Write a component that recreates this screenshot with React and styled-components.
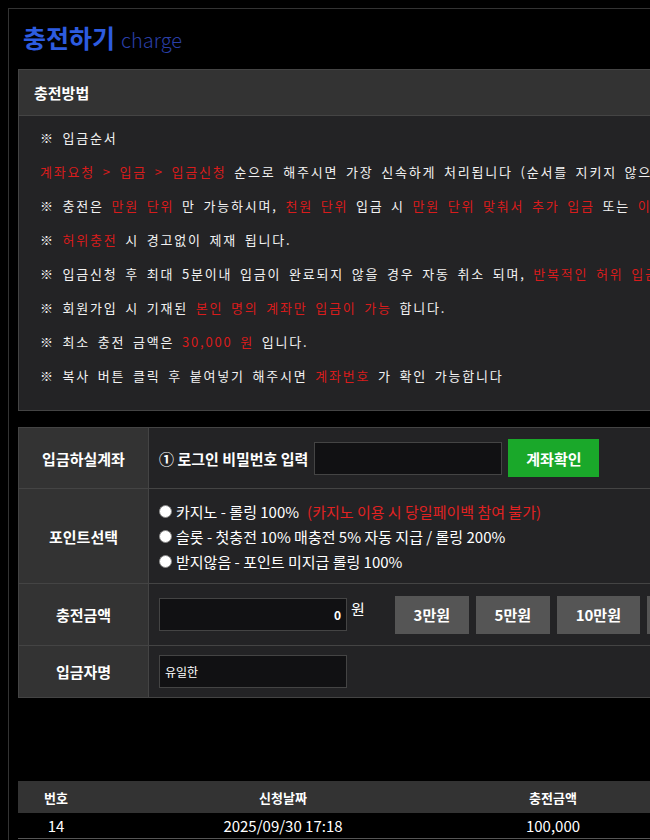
import styled, { createGlobalStyle } from "styled-components";

const GlobalStyle = createGlobalStyle`
  html { overflow: hidden; }
  body {
    margin: 8px;
    width: 1140px;
    background: #000;
    color: #fff;
    font-family: "Noto Sans CJK KR", "Noto Sans", sans-serif;
  }
`;

const Wrap = styled.div`
  width: 1100px;
  min-width: 1100px;
  border: 1px solid #333;
  padding: 7px 9px 40px;
`;

const Title = styled.h1`
  margin: 0 0 11px 5px;
  display: flex;
  align-items: baseline;
  gap: 6px;
  height: 42px;
  font-size: 25px;
  font-weight: 700;
  color: #2d5ce0;
  line-height: 42px;
  span {
    font-size: 20px;
    font-weight: 300;
    color: #2a3fa6;
  }
`;

const Panel = styled.div`
  border: 1px solid #444;
  background: #232325;
`;

const PanelHead = styled.div`
  height: 45px;
  display: flex;
  align-items: center;
  padding-left: 15px;
  background: #333;
  border-bottom: 1px solid #444;
  font-size: 15px;
  font-weight: 700;
`;

const PanelBody = styled.div`
  padding: 5px 21px 17px;
  font-size: 13px;
  letter-spacing: 1.8px;
  word-spacing: 3px;
  color: #f2f2f2;
  p {
    margin: 0;
    height: 34px;
    line-height: 34px;
    white-space: nowrap;
  }
  em {
    font-style: normal;
    color: #d81c1c;
  }
`;

const FormTable = styled.table`
  margin-top: 16px;
  width: 100%;
  border-collapse: collapse;
  font-size: 15px;
  td, th { border: 1px solid #444; }
`;

const Label = styled.th`
  width: 129px;
  background: #333;
  font-weight: 700;
  font-size: 15px;
  height: ${(p) => p.$h}px;
  padding: 0;
`;

const Cell = styled.td`
  background: #232325;
  padding: 0 10px;
  vertical-align: middle;
`;

const Inline = styled.div`
  display: flex;
  align-items: center;
  gap: ${(p) => p.$gap || 0}px;
`;

const Strong = styled.span`
  font-weight: 700;
`;

const Input = styled.div`
  box-sizing: border-box;
  width: ${(p) => p.$w || 188}px;
  height: 33px;
  background: #111113;
  border: 1px solid #444;
  display: flex;
  align-items: center;
  justify-content: ${(p) => (p.$right ? "flex-end" : "flex-start")};
  padding: 0 5px;
  font-size: 12px;
  font-weight: ${(p) => (p.$right ? 700 : 400)};
  flex-shrink: 0;
`;

const GreenButton = styled.button`
  width: 91px;
  height: 38px;
  border: none;
  background: #1aa82a;
  color: #fff;
  font-family: inherit;
  font-size: 15px;
  font-weight: 700;
`;

const AmountButton = styled.button`
  width: ${(p) => p.$w}px;
  height: 38px;
  border: none;
  background: #555;
  color: #fff;
  font-family: inherit;
  font-size: 15px;
  font-weight: 700;
  flex-shrink: 0;
`;

const RadioList = styled.div`
  padding: 9px 0;
  display: flex;
  flex-direction: column;
`;

const RadioRow = styled.label`
  display: flex;
  align-items: center;
  gap: 4px;
  height: 25px;
  font-size: 15px;
  white-space: nowrap;
  em {
    font-style: normal;
    color: #e02222;
    margin-left: 4px;
  }
`;

const Dot = styled.span`
  box-sizing: border-box;
  width: 13px;
  height: 13px;
  border-radius: 50%;
  background: #fff;
  border: 1px solid #888;
`;

const Won = styled.span`
  margin: 0 30px 0 4px;
  align-self: flex-start;
  padding-top: 2px;
  flex-shrink: 0;
`;

const ListTable = styled.table`
  margin-top: 83px;
  width: 100%;
  border-collapse: collapse;
  th {
    background: #333;
    height: 32px;
    font-size: 13px;
    font-weight: 700;
    padding: 0;
  }
  td {
    height: 25px;
    font-size: 15px;
    text-align: center;
    border-bottom: 1px solid #555;
    padding: 0;
  }
`;

const notices = [
  <>※ 입금순서</>,
  <><em>계좌요청 &gt; 입금 &gt; 입금신청</em> 순으로 해주시면 가장 신속하게 처리됩니다 (순서를 지키지 않으시면 처리가 지연될 수 있습니다)</>,
  <>※ 충전은 <em>만원 단위</em> 만 가능하시며, <em>천원 단위</em> 입금 시 <em>만원 단위 맞춰서 추가 입금</em> 또는 <em>이체 후 재신청</em> 해주세요</>,
  <>※ <em>허위충전</em> 시 경고없이 제재 됩니다.</>,
  <>※ 입금신청 후 최대 5분이내 입금이 완료되지 않을 경우 자동 취소 되며, <em>반복적인 허위 입금신청 시 제재</em> 됩니다.</>,
  <>※ 회원가입 시 기재된 <em>본인 명의 계좌만 입금이 가능</em> 합니다.</>,
  <>※ 최소 충전 금액은 <em>30,000 원</em> 입니다.</>,
  <>※ 복사 버튼 클릭 후 붙여넣기 해주시면 <em>계좌번호</em> 가 확인 가능합니다</>,
];

export default function App() {
  return (
    <>
      <GlobalStyle />
      <Wrap>
        <Title>
          충전하기<span>charge</span>
        </Title>

        <Panel>
          <PanelHead>충전방법</PanelHead>
          <PanelBody>
            {notices.map((n, i) => (
              <p key={i}>{n}</p>
            ))}
          </PanelBody>
        </Panel>

        <FormTable>
          <tbody>
            <tr>
              <Label $h={60}>입금하실계좌</Label>
              <Cell>
                <Inline $gap={6}>
                  <Strong>① 로그인 비밀번호 입력</Strong>
                  <Input />
                  <GreenButton>계좌확인</GreenButton>
                </Inline>
              </Cell>
            </tr>
            <tr>
              <Label $h={94}>포인트선택</Label>
              <Cell>
                <RadioList>
                  <RadioRow>
                    <Dot />카지노 - 롤링 100%<em>(카지노 이용 시 당일페이백 참여 불가)</em>
                  </RadioRow>
                  <RadioRow>
                    <Dot />슬롯 - 첫충전 10% 매충전 5% 자동 지급 / 롤링 200%
                  </RadioRow>
                  <RadioRow>
                    <Dot />받지않음 - 포인트 미지급 롤링 100%
                  </RadioRow>
                </RadioList>
              </Cell>
            </tr>
            <tr>
              <Label $h={61}>충전금액</Label>
              <Cell>
                <Inline>
                  <Input $right>0</Input>
                  <Won>원</Won>
                  <Inline $gap={7}>
                    <AmountButton $w={74}>3만원</AmountButton>
                    <AmountButton $w={74}>5만원</AmountButton>
                    <AmountButton $w={83}>10만원</AmountButton>
                    <AmountButton $w={83}>50만원</AmountButton>
                    <AmountButton $w={83}>100만원</AmountButton>
                    <AmountButton $w={74}>정정</AmountButton>
                  </Inline>
                </Inline>
              </Cell>
            </tr>
            <tr>
              <Label $h={51}>입금자명</Label>
              <Cell>
                <Input>유일한</Input>
              </Cell>
            </tr>
          </tbody>
        </FormTable>

        <ListTable>
          <colgroup>
            <col style={{ width: 76 }} />
            <col style={{ width: 378 }} />
            <col style={{ width: 162 }} />
            <col />
          </colgroup>
          <thead>
            <tr>
              <th>번호</th>
              <th>신청날짜</th>
              <th>충전금액</th>
              <th>상태</th>
            </tr>
          </thead>
          <tbody>
            <tr>
              <td>14</td>
              <td>2025/09/30 17:18</td>
              <td>100,000</td>
              <td>완료</td>
            </tr>
          </tbody>
        </ListTable>
      </Wrap>
    </>
  );
}
